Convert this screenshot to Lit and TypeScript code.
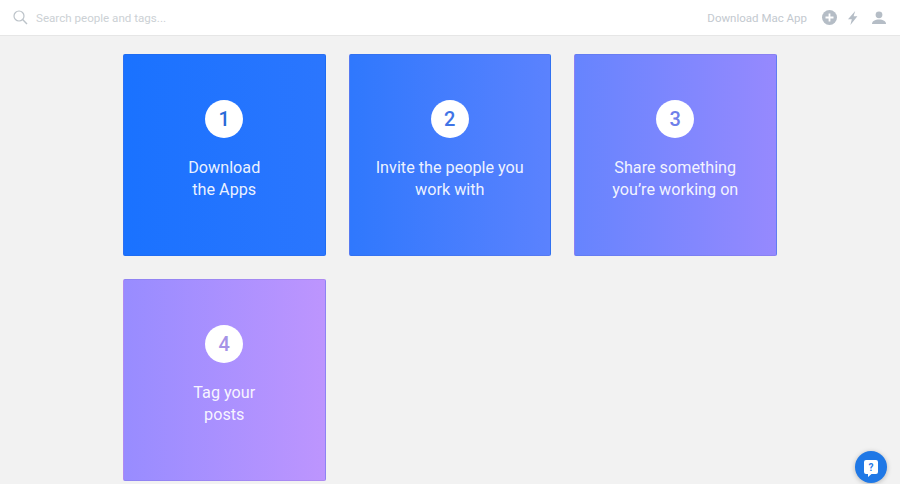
import { LitElement, html, css, svg } from 'lit';
import { customElement } from 'lit/decorators.js';

const steps = [
  { n: 1, lines: ['Download', 'the Apps'], from: '#1a72ff', to: '#2b76fe', num: '#2a6bd8' },
  { n: 2, lines: ['Invite the people you', 'work with'], from: '#2f78fd', to: '#5b82fe', num: '#3f74e6' },
  { n: 3, lines: ['Share something', 'you’re working on'], from: '#6684fe', to: '#9689fe', num: '#6f80ea' },
  { n: 4, lines: ['Tag your', 'posts'], from: '#988cff', to: '#bd95fe', num: '#a593e6' },
];

const searchIcon = svg`<circle cx="6" cy="6" r="5" fill="none" stroke="#bcc3c9" stroke-width="1.2"/><path d="M9.6 9.6 L14 14" stroke="#bcc3c9" stroke-width="1.4" fill="none"/>`;
const plusIcon = svg`<circle cx="7.5" cy="7.5" r="7.5" fill="#b5bdc6"/><path d="M7.5 3.5v8M3.5 7.5h8" stroke="#fff" stroke-width="1.8"/>`;
const boltIcon = svg`<path d="M7.2 0 L0 8.2 H3.8 L2.4 14 L9.4 5.2 H5.6 Z" fill="#b5bdc6"/>`;
const userIcon = svg`<circle cx="7" cy="3.8" r="3.4" fill="#b5bdc6"/><path d="M0 13 C0 10 3 8.4 7 8.4 C11 8.4 14 10 14 13 Z" fill="#b5bdc6"/>`;
const helpIcon = svg`<path d="M2 0 H12 A2 2 0 0 1 14 2 V12 A2 2 0 0 1 12 14 H7.5 L4 17 V14 H2 A2 2 0 0 1 0 12 V2 A2 2 0 0 1 2 0 Z" fill="#fff"/>`;

@customElement('app-root')
export class AppRoot extends LitElement {
  static styles = css`
    :host {
      display: block;
      position: relative;
      height: 484px;
      overflow: hidden;
      background: #f2f2f2;
      font-family: Roboto, "Liberation Sans", sans-serif;
    }

    .topbar {
      display: flex;
      align-items: center;
      height: 35px;
      padding: 0 14px 0 13px;
      background: #fff;
      border-bottom: 1px solid #e6e6e6;
    }

    .search {
      flex: 1;
      display: flex;
      align-items: center;
      gap: 8px;
      color: #ccd1d5;
      font-size: 11.6px;
    }

    .actions {
      display: flex;
      align-items: center;
      color: #c3c9cf;
      font-size: 11.5px;
    }

    .actions .mac {
      margin-right: 15px;
    }

    .actions svg {
      display: block;
    }

    .actions .bolt {
      margin: 0 14px 0 11px;
    }

    .grid {
      display: grid;
      grid-template-columns: repeat(3, 202.5px);
      gap: 23px;
      padding: 18px 0 0 123px;
    }

    .card {
      height: 202px;
      box-sizing: border-box;
      display: flex;
      flex-direction: column;
      align-items: center;
      padding-top: 45px;
      border-radius: 2px;
      border: 1px solid rgba(60, 60, 140, 0.1);
      color: rgba(255, 255, 255, 0.92);
      text-align: center;
      font-size: 16.2px;
      line-height: 22px;
      font-weight: 400;
    }

    .badge {
      width: 38px;
      height: 38px;
      border-radius: 50%;
      background: #fff;
      display: flex;
      align-items: center;
      justify-content: center;
      font-size: 20px;
      font-weight: 500;
      margin-bottom: 19px;
    }

    .help {
      position: absolute;
      right: 13px;
      bottom: 1px;
      width: 32px;
      height: 32px;
      border-radius: 50%;
      background: #1f78e6;
      box-shadow: 0 1px 5px rgba(0, 0, 0, 0.25);
      display: flex;
      align-items: center;
      justify-content: center;
    }

    .help svg {
      display: block;
      margin-top: 3px;
    }

    .help span {
      position: absolute;
      top: 11px;
      left: 0;
      right: 0;
      text-align: center;
      color: #1f78e6;
      font-size: 10px;
      line-height: 12px;
      font-weight: 700;
    }
  `

  render() {
    return html`
      <div class="topbar">
        <div class="search">
          <svg width="15" height="15" viewBox="0 0 15 15">${searchIcon}</svg>
          <span>Search people and tags...</span>
        </div>
        <div class="actions">
          <span class="mac">Download Mac App</span>
          <svg width="15" height="15" viewBox="0 0 15 15">${plusIcon}</svg>
          <svg class="bolt" width="10" height="14" viewBox="0 0 10 14">${boltIcon}</svg>
          <svg width="14" height="13" viewBox="0 0 14 13">${userIcon}</svg>
        </div>
      </div>
      <div class="grid">
        ${steps.map(
          (s) => html`
            <div class="card" style="background: linear-gradient(90deg, ${s.from}, ${s.to})">
              <div class="badge" style="color: ${s.num}">${s.n}</div>
              ${s.lines.map((l) => html`<div>${l}</div>`)}
            </div>
          `
        )}
      </div>
      <div class="help">
        <svg width="14" height="17" viewBox="0 0 14 17">${helpIcon}</svg>
        <span>?</span>
      </div>
    `
  }
}
